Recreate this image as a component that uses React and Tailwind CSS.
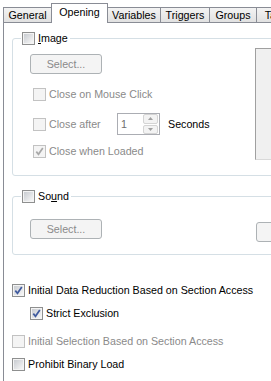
import React from 'react';

const tabs = [
  { label: 'General', w: 'w-[49px]' },
  { label: 'Opening', w: 'w-[57px]', active: true },
  { label: 'Variables', w: 'w-[54px]' },
  { label: 'Triggers', w: 'w-[50px]' },
  { label: 'Groups', w: 'w-[48px]' },
  { label: 'Tabs', w: 'w-[40px]' },
];

function Check({ checked, disabled }) {
  return (
    <span
      className={`flex h-[13px] w-[13px] shrink-0 items-center justify-center border ${
        disabled ? 'border-[#c2c2c2] bg-[#f4f4f4]' : 'border-[#8e8f8f] bg-[#f4f4f4]'
      }`}
    >
      <span
        className={`flex h-[9px] w-[9px] ${
          disabled ? 'bg-[#f4f4f4]' : 'bg-linear-to-br from-[#c9ccd1] to-[#f7f7f7]'
        }`}
      >
        {checked && (
          <svg viewBox="0 0 9 9" className="h-[9px] w-[9px] overflow-visible">
            <path
              d="M1.3 4.6 L3.5 7.3 L7.8 1"
              fill="none"
              stroke={disabled ? '#a8a8a8' : '#3f5a9e'}
              strokeWidth="1.7"
            />
          </svg>
        )}
      </span>
    </span>
  );
}

function CheckRow({ label, checked, disabled, className = '' }) {
  return (
    <div className={`flex h-[13px] items-center ${className}`}>
      <Check checked={checked} disabled={disabled} />
      <span className={`ml-[3px] whitespace-nowrap ${disabled ? 'text-[#8a8a8a]' : 'text-black'}`}>
        {label}
      </span>
    </div>
  );
}

function SelectButton() {
  return (
    <div className="flex h-[20px] w-[72px] items-center justify-center rounded-[3px] border border-[#adb2b5] bg-[#f4f4f4] text-[#8a8a8a]">
      Select...
    </div>
  );
}

function Legend({ children }) {
  return (
    <legend className="ml-[8px] flex h-[14px] items-end pl-px pr-[2px]">
      <Check />
      <span className="ml-[3px] self-center pt-px text-black">{children}</span>
    </legend>
  );
}

function SpinBox() {
  return (
    <div className="flex h-[22px] w-[43px] items-center border border-[#abadb3] bg-white pl-[3px] pr-px">
      <span className="flex-1 text-[#6d6d6d]">1</span>
      <div className="flex h-[20px] w-[15px] flex-col gap-px">
        <span className="flex flex-1 items-center justify-center rounded-[2px] border border-[#d4d4d4] bg-[#f3f3f3]">
          <svg viewBox="0 0 5 3" className="h-[3px] w-[5px]">
            <path d="M0 3 L2.5 0 L5 3 Z" fill="#a0a0a0" />
          </svg>
        </span>
        <span className="flex flex-1 items-center justify-center rounded-[2px] border border-[#d4d4d4] bg-[#f3f3f3]">
          <svg viewBox="0 0 5 3" className="h-[3px] w-[5px]">
            <path d="M0 0 L2.5 3 L5 0 Z" fill="#a0a0a0" />
          </svg>
        </span>
      </div>
    </div>
  );
}

export default function App() {
  return (
    <div className="flex h-[381px] w-[271px] flex-col overflow-hidden bg-white font-['Liberation_Sans',Arial,sans-serif] text-[10.7px] leading-[13px] text-black">
      {/* tab strip */}
      <div className="flex h-[22px] shrink-0 items-end pl-[3px]">
        {tabs.map((t, i) =>
          t.active ? (
            <div
              key={t.label}
              className={`relative z-10 -mb-px -ml-px flex h-[20px] ${t.w} shrink-0 items-center justify-center border-x border-t border-[#898c95] bg-white pb-[2px]`}
            >
              {t.label}
            </div>
          ) : (
            <div
              key={t.label}
              className={`flex h-[15px] ${t.w} shrink-0 items-center justify-center border-x border-t border-[#898c95] bg-linear-to-b from-[#f3f3f3] to-[#e1e1e1] ${
                i === 0 ? '' : '-ml-px'
              }`}
            >
              {t.label}
            </div>
          )
        )}
      </div>

      {/* page */}
      <div className="ml-[3px] flex-1 border-l border-t border-[#898c95] bg-white">
        <fieldset className="ml-[8px] mt-[8px] w-[320px] rounded-[3px] border border-[#d5dfe5]">
          <Legend>
            <span className="underline">I</span>mage
          </Legend>
          <div className="flex items-start">
            <div className="w-[242px] shrink-0 pb-[17px] pl-[17px] pt-[9px]">
              <SelectButton />
              <CheckRow className="ml-[3px] mt-[14px]" label="Close on Mouse Click" disabled />
              <div className="ml-[3px] mt-[12px] flex h-[22px] items-center">
                <Check disabled />
                <span className="ml-[3px] w-[68px] text-[#8a8a8a]">Close after</span>
                <SpinBox />
                <span className="ml-[8px]">Seconds</span>
              </div>
              <CheckRow className="ml-[3px] mt-[10px]" label="Close when Loaded" checked disabled />
            </div>
            <div className="mt-[3px] h-[112px] w-[60px] border-l border-t border-b border-[#a0a0a0] border-b-[#d9d9d9] bg-[#f0f0f0]" />
          </div>
        </fieldset>

        <fieldset className="ml-[8px] mt-[13px] w-[320px] rounded-[3px] border border-[#d5dfe5]">
          <Legend>
            So<span className="underline">u</span>nd
          </Legend>
          <div className="flex items-start">
            <div className="w-[243px] shrink-0 pb-[15px] pl-[17px] pt-[16px]">
              <SelectButton />
            </div>
            <div className="mt-[19px] h-[20px] w-[60px] rounded-[3px] border border-[#adb2b5] bg-[#f4f4f4]" />
          </div>
        </fieldset>

        <CheckRow className="ml-[8px] mt-[29px]" label="Initial Data Reduction Based on Section Access" checked />
        <CheckRow className="ml-[26px] mt-[10px]" label="Strict Exclusion" checked />
        <CheckRow className="ml-[8px] mt-[15px]" label="Initial Selection Based on Section Access" disabled />
        <CheckRow className="ml-[8px] mt-[10px]" label="Prohibit Binary Load" />
      </div>
    </div>
  );
}
